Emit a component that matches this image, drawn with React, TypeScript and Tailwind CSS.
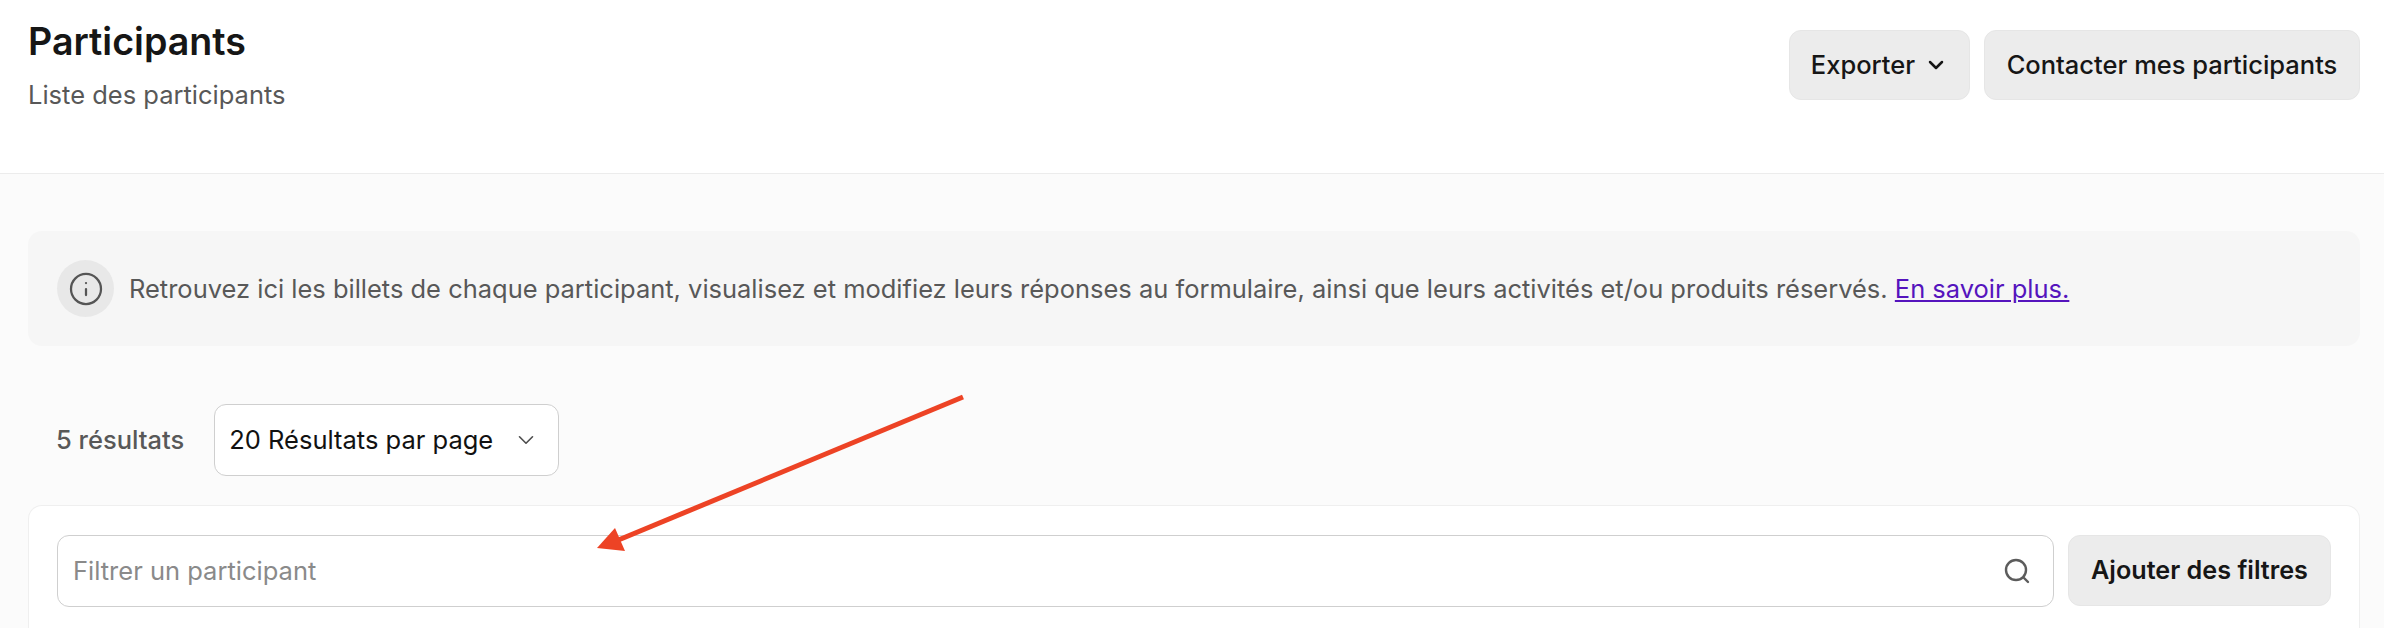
import { ChevronDown, Info } from 'lucide-react';

export default function App() {
  return (
    <div className="relative flex h-[628px] w-[2384px] flex-col overflow-hidden bg-[#fbfbfb] font-['Inter',sans-serif]">
      {/* Header */}
      <header className="flex h-[174px] shrink-0 items-start justify-between border-b border-[#ececec] bg-white px-[24px] pl-[28px]">
        <div>
          <h1 className="mt-[19px] text-[37.6px] leading-[46px] font-semibold text-[#161616]">Participants</h1>
          <p className="mt-[14px] text-[25.5px] leading-[32px] text-[#585858]">Liste des participants</p>
        </div>
        <div className="mt-[30px] flex gap-[14px]">
          <button className="flex h-[70px] w-[181px] items-center justify-center gap-[9px] rounded-[12px] border border-[#e6e6e6] bg-[#ececec] text-[25.5px] font-medium text-[#161616]">
            Exporter
            <ChevronDown size={24} strokeWidth={2.5} />
          </button>
          <button className="h-[70px] w-[376px] rounded-[12px] border border-[#e6e6e6] bg-[#ececec] text-[25.5px] font-medium text-[#161616]">
            Contacter mes participants
          </button>
        </div>
      </header>

      <main className="flex flex-1 flex-col px-[24px] pt-[57px] pl-[28px]">
        {/* Info banner */}
        <div className="flex h-[115px] shrink-0 items-center gap-[15px] rounded-[14px] bg-[#f6f6f6] pl-[29px]">
          <div className="flex size-[57px] items-center justify-center rounded-full bg-[#e8e8e8] text-[#555555]">
            <Info size={36} strokeWidth={1.5} />
          </div>
          <p className="mt-[1px] text-[25.48px] text-[#585858]">
            Retrouvez ici les billets de chaque participant, visualisez et modifiez leurs réponses au formulaire, ainsi que leurs activités et/ou produits réservés.{' '}
            <a className="text-[#5514bd] underline">En savoir plus.</a>
          </p>
        </div>

        {/* Results per page */}
        <div className="mt-[58px] flex shrink-0 items-center gap-[30px] pl-[28px]">
          <span className="text-[25.5px] font-medium text-[#585858]">5 résultats</span>
          <div className="flex h-[72px] w-[345px] items-center justify-between rounded-[12px] border border-[#cfcfcf] bg-white pr-[19px] pl-[14px] text-[25.5px] text-[#111111]">
            <span>20 Résultats par page</span>
            <ChevronDown size={26} strokeWidth={1.5} className="text-[#4d4d4d]" />
          </div>
        </div>

        {/* Filters */}
        <div className="mt-[29px] flex flex-1 items-start gap-[14px] rounded-t-[14px] border border-b-0 border-[#efefef] bg-white px-[28px] pt-[29px]">
          <div className="flex h-[72px] flex-1 items-center justify-between rounded-[12px] border border-[#cfcfcf] bg-white pr-[22px] pl-[15px]">
            <span className="text-[25.5px] text-[#8a8a8a]">Filtrer un participant</span>
            <svg width="28" height="28" viewBox="0 0 28 28" fill="none" stroke="#5c5c5c" strokeWidth="2.4" strokeLinecap="round">
              <circle cx="13" cy="13" r="10" />
              <path d="M21 21l4 4" />
            </svg>
          </div>
          <button className="h-[71px] w-[263px] rounded-[12px] border border-[#e6e6e6] bg-[#ececec] text-[25.2px] font-semibold text-[#161616]">
            Ajouter des filtres
          </button>
        </div>
      </main>

      {/* Red annotation arrow */}
      <svg className="absolute top-0 left-0" width="2384" height="628" viewBox="0 0 2384 628" fill="none">
        <path d="M963 397L616 541" stroke="#ed4325" strokeWidth="5" />
        <path d="M597 548L615 528L625 551Z" fill="#ed4325" />
      </svg>
    </div>
  );
}
